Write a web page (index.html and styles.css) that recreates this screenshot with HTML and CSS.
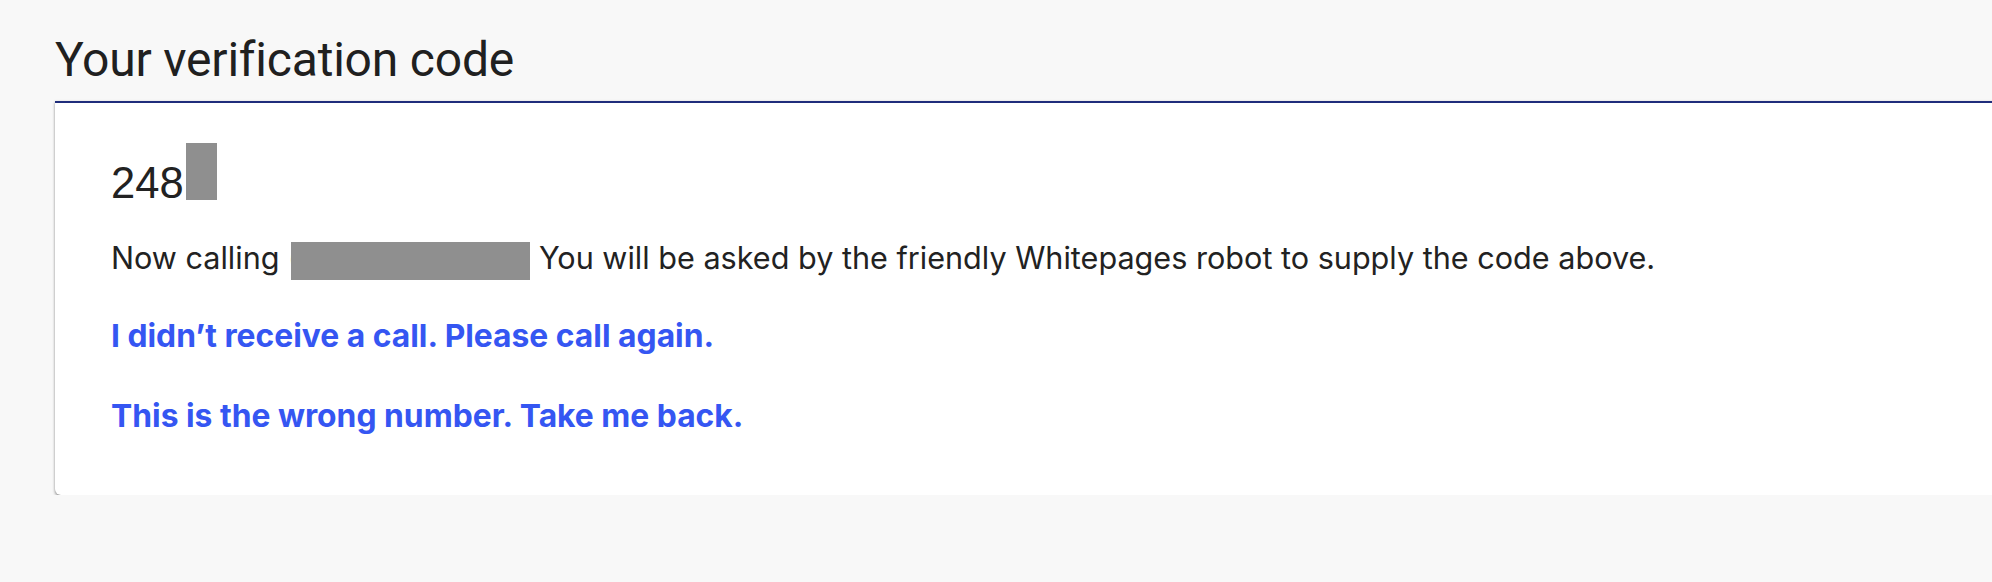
FILE: index.html
```html
<!DOCTYPE html>
<html lang="en">
<head>
<meta charset="utf-8">
<title>Your verification code</title>
<link rel="stylesheet" href="styles.css">
</head>
<body>
<main class="page">
  <h1 class="title">Your verification code</h1>
  <section class="card">
    <div class="code">248<span class="redact redact-code"></span></div>
    <p class="calling">Now calling <span class="paren">(</span><span class="redact redact-phone"></span> You will be asked by the friendly Whitepages robot to supply the code above.</p>
    <a class="link link-first" href="#">I didn’t receive a call. Please call again.</a>
    <a class="link link-second" href="#">This is the wrong number. Take me back.</a>
  </section>
</main>
</body>
</html>
```
FILE: styles.css
```css
html, body {
  margin: 0;
  padding: 0;
  background: #f8f8f8;
  overflow: hidden;
}

.page {
  padding: 32px 0 0 55px;
  margin-right: -30px;
}

.title {
  margin: 0 0 13px 0;
  font-family: Roboto, "Noto Sans", sans-serif;
  font-weight: 400;
  font-size: 48px;
  line-height: 56px;
  color: #202020;
  letter-spacing: -0.2px;
}

.card {
  background: #ffffff;
  border-top: 2px solid #1f2d7b;
  border-radius: 0 0 6px 6px;
  box-shadow: 0 2px 3px rgba(0, 0, 0, 0.4), 0 0 3px rgba(0, 0, 0, 0.08);
  padding: 40px 0 60px 56px;
  display: flex;
  flex-direction: column;
  align-items: flex-start;
  color: #222222;
}

.code {
  font-family: "Liberation Sans", Arial, sans-serif;
  font-size: 43.5px;
  line-height: 1;
  color: #222222;
}

.redact {
  display: inline-block;
  background: #8f8f8f;
}

.redact-code {
  width: 31px;
  height: 57px;
  margin-left: 2px;
  vertical-align: -2px;
}

.calling {
  margin: 33px 0 0 0;
  font-family: Inter, "Liberation Sans", sans-serif;
  font-size: 30.6px;
  line-height: 38px;
  color: #222222;
}

.paren {
  color: #222222;
}

.redact-phone {
  width: 239px;
  height: 38px;
  margin-left: -8px;
  vertical-align: -11px;
}

.link {
  display: block;
  font-family: Inter, "Liberation Sans", sans-serif;
  font-weight: 700;
  font-size: 31.8px;
  line-height: 38px;
  color: #3556f2;
  text-decoration: none;
}

.link-first {
  margin-top: 37px;
}

.link-second {
  margin-top: 42px;
}
```
